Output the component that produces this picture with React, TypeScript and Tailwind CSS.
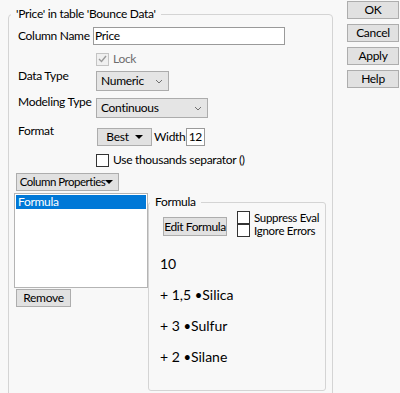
import React from "react";

const Chevron = () => (
  <svg width="8" height="5" viewBox="0 0 8 5">
    <path d="M1 1l3 3 3-3" fill="none" stroke="#707070" strokeWidth="1" />
  </svg>
);

const Caret = () => (
  <svg width="8" height="4" viewBox="0 0 8 4" className="shrink-0">
    <path d="M0 0h8L4 4z" fill="#000" />
  </svg>
);

const CheckBox = ({ disabled, checked }: { disabled?: boolean; checked?: boolean }) => (
  <div
    className={
      "flex h-[13px] w-[13px] shrink-0 items-center justify-center border " +
      (disabled ? "border-[#c4c4c4] bg-[#f0f0f0]" : "border-[#333333] bg-white")
    }
  >
    {checked && (
      <svg width="9" height="8" viewBox="0 0 9 8">
        <path d="M1 4l2.5 2.5L8 1" fill="none" stroke={disabled ? "#9a9a9a" : "#222"} strokeWidth="1.4" />
      </svg>
    )}
  </div>
);

const Button = ({ children, className = "" }: { children: React.ReactNode; className?: string }) => (
  <div
    className={
      "flex items-center justify-center border border-[#adadad] bg-[#e1e1e1] text-black " + className
    }
  >
    {children}
  </div>
);

export default function App() {
  return (
    <div
      className="flex h-[393px] items-start overflow-hidden whitespace-nowrap bg-[#f8f8f8] pt-[6px] text-[12px] leading-[16px] tracking-[-0.3px] text-black"
      style={{ fontFamily: '"Segoe UI", Lato, sans-serif' }}
    >
      <fieldset className="ml-[8px] h-[420px] w-[325px] shrink-0 rounded-[4px] border border-[#d4d4d4]">
        <legend className="ml-[2px] px-[5px]">'Price' in table 'Bounce Data'</legend>

        <div className="pl-[9px]">
          <div className="mt-[5px] flex items-center">
            <div className="w-[75px]">Column Name</div>
            <div className="flex h-[18px] w-[192px] items-center border border-[#9a9a9a] bg-white pl-[1px]">
              Price
            </div>
          </div>

          <div className="mt-[6px] flex items-center pl-[78px]">
            <CheckBox disabled checked />
            <span className="ml-[4px] text-[#6d6d6d]">Lock</span>
          </div>

          <div className="mt-[4px] flex items-start">
            <div className="-mt-[3px] w-[78px]">Data Type</div>
            <div className="flex h-[20px] w-[73px] items-center justify-between border border-[#acacac] bg-[#e5e5e5] pl-[4px] pr-[5px]">
              <span>Numeric</span>
              <Chevron />
            </div>
          </div>

          <div className="mt-[7px] flex items-start">
            <div className="-mt-[4px] w-[78px]">Modeling Type</div>
            <div className="flex h-[20px] w-[112px] items-center justify-between border border-[#acacac] bg-[#e5e5e5] pl-[4px] pr-[5px]">
              <span>Continuous</span>
              <Chevron />
            </div>
          </div>

          <div className="mt-[10px] flex items-start">
            <div className="-mt-[5px] w-[79px]">Format</div>
            <Button className="h-[18px] w-[55px] gap-[6px]">
              <span>Best</span>
              <Caret />
            </Button>
            <span className="ml-[2px] w-[30px] leading-[18px]">Width</span>
            <div className="ml-[2px] flex h-[18px] w-[19px] items-center justify-end border border-[#9a9a9a] bg-white pr-[2px]">
              12
            </div>
          </div>

          <div className="mt-[6px] flex items-center pl-[78px]">
            <CheckBox />
            <span className="ml-[4px]">Use thousands separator ()</span>
          </div>
        </div>

        <div className="mt-[5px] pl-[7px]">
          <Button className="h-[18px] w-[103px] justify-between pl-[2px] pr-[4px]">
            <span className="text-[11.5px] tracking-[-0.5px]">Column Properties</span>
            <Caret />
          </Button>
        </div>

        <div className="mt-[2px] flex items-start pl-[5px]">
          <div className="w-[134px] shrink-0">
            <div className="h-[95px] border border-[#b4b4b4] bg-white p-[1px]">
              <div className="bg-[#0078d7] pl-[2px] leading-[14px] text-white">Formula</div>
            </div>
            <Button className="ml-[2px] mt-[1px] h-[18px] w-[55px]">Remove</Button>
          </div>

          <fieldset className="mt-[1px] h-[197px] w-[178px] shrink-0 rounded-[3px] border border-[#d4d4d4]">
            <legend className="ml-[1px] px-[5px]">Formula</legend>
            <div className="mt-[1px] flex items-start pl-[14px]">
              <Button className="mt-[6px] h-[19px] w-[64px] tracking-[-0.4px]">Edit Formula</Button>
              <div className="ml-[10px] flex flex-col text-[11.5px]">
                <div className="flex h-[13px] items-center">
                  <CheckBox />
                  <span className="ml-[4px] leading-[13px]">Suppress Eval</span>
                </div>
                <div className="flex h-[13px] items-center">
                  <CheckBox />
                  <span className="ml-[4px] leading-[13px]">Ignore Errors</span>
                </div>
              </div>
            </div>
            <div className="mt-[18px] flex flex-col gap-[13px] pl-[11px] text-[14px] leading-[18px] tracking-normal">
              <div>10</div>
              <div>
                + 1,5 <span className="text-[13px]">•</span>Silica
              </div>
              <div>
                + 3 <span className="text-[13px]">•</span>Sulfur
              </div>
              <div>
                + 2 <span className="text-[13px]">•</span>Silane
              </div>
            </div>
          </fieldset>
        </div>
      </fieldset>

      <div className="ml-[14px] flex flex-col gap-[5px]">
        <Button className="-mt-[5px] h-[18px] w-[52px]">OK</Button>
        <Button className="h-[18px] w-[52px]">Cancel</Button>
        <Button className="h-[18px] w-[52px]">Apply</Button>
        <Button className="h-[18px] w-[52px]">Help</Button>
      </div>
    </div>
  );
}
